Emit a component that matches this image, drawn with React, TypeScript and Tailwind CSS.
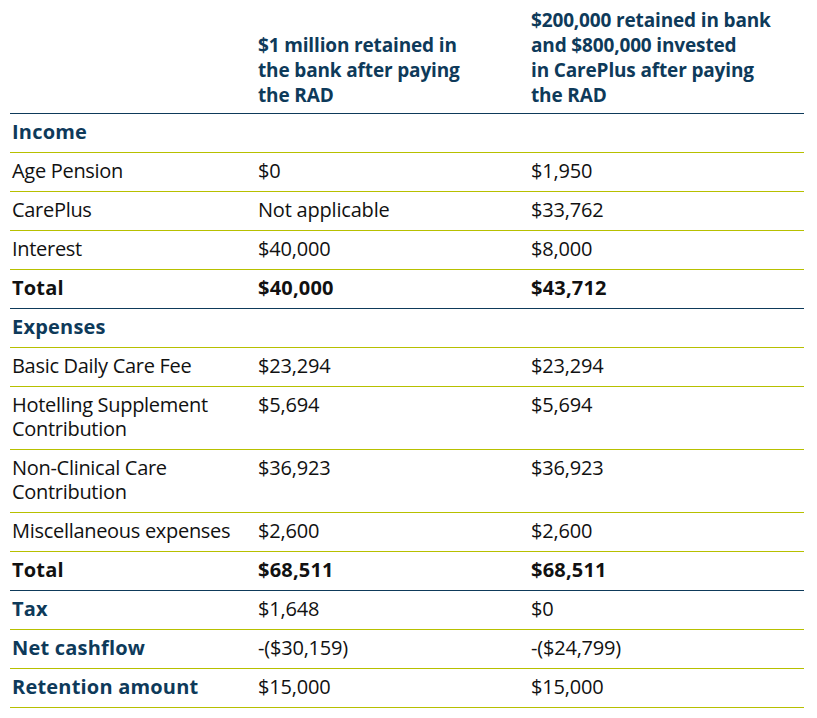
type Row = {
  label: string;
  a: string;
  b: string;
  kind?: "section" | "total" | "heading";
  line?: "navy" | "lime";
  tall?: boolean;
};

const rows: Row[] = [
  { label: "Income", a: "", b: "", kind: "section" },
  { label: "Age Pension", a: "$0", b: "$1,950" },
  { label: "CarePlus", a: "Not applicable", b: "$33,762" },
  { label: "Interest", a: "$40,000", b: "$8,000" },
  { label: "Total", a: "$40,000", b: "$43,712", kind: "total", line: "navy" },
  { label: "Expenses", a: "", b: "", kind: "section" },
  { label: "Basic Daily Care Fee", a: "$23,294", b: "$23,294" },
  { label: "Hotelling Supplement Contribution", a: "$5,694", b: "$5,694", tall: true },
  { label: "Non-Clinical Care Contribution", a: "$36,923", b: "$36,923", tall: true },
  { label: "Miscellaneous expenses", a: "$2,600", b: "$2,600" },
  { label: "Total", a: "$68,511", b: "$68,511", kind: "total", line: "navy" },
  { label: "Tax", a: "$1,648", b: "$0", kind: "heading" },
  { label: "Net cashflow", a: "-($30,159)", b: "-($24,799)", kind: "heading" },
  { label: "Retention amount", a: "$15,000", b: "$15,000", kind: "heading" },
];

function TableRow({ row }: { row: Row }) {
  const border =
    row.line === "navy" ? "border-[#0e3a5a]" : "border-[#b7c000]";
  const labelClass =
    row.kind === "total"
      ? "font-bold text-[#111] tracking-[0.2px]"
      : row.kind === "section" || row.kind === "heading"
        ? "font-bold text-[#0e3a5a] tracking-[0.2px]"
        : "text-[#111] tracking-[-0.3px]";
  const valueClass = row.kind === "total" ? "font-bold tracking-[0.2px]" : "";
  const words = row.label.split(" ");
  return (
    <div
      className={`grid grid-cols-[246px_273px_275px] border-b ${border} pt-[6px] pb-[8px] leading-[24px]`}
    >
      <div className={`pl-[2px] pr-4 ${labelClass}`}>
        {row.tall ? (
          <>
            <div className="h-[24px]">{words.slice(0, -1).join(" ")}</div>
            <div className="h-[24px]">{words[words.length - 1]}</div>
          </>
        ) : (
          row.label
        )}
      </div>
      <div className={`pl-[2px] text-[#111] ${valueClass}`}>{row.a}</div>
      <div className={`pl-[2px] text-[#111] ${valueClass}`}>{row.b}</div>
    </div>
  );
}

export default function App() {
  return (
    <main className="min-h-screen bg-white pt-[8px] pl-[10px] font-['Open_Sans',sans-serif] text-[20px] tracking-[-0.2px]">
      <div className="w-[794px]">
        <div className="grid grid-cols-[246px_273px_275px] items-end border-b border-[#0e3a5a] pb-[5px] text-[19px] leading-[25px] font-bold text-[#0e3a5a] tracking-[-0.15px]">
          <div />
          <div className="pl-[2px]">
            $1 million retained in
            <br />
            the bank after paying
            <br />
            the RAD
          </div>
          <div className="pl-[2px]">
            $200,000 retained in bank
            <br />
            and $800,000 invested
            <br />
            in CarePlus after paying
            <br />
            the RAD
          </div>
        </div>
        {rows.map((row, i) => (
          <TableRow key={i} row={row} />
        ))}
      </div>
    </main>
  );
}
